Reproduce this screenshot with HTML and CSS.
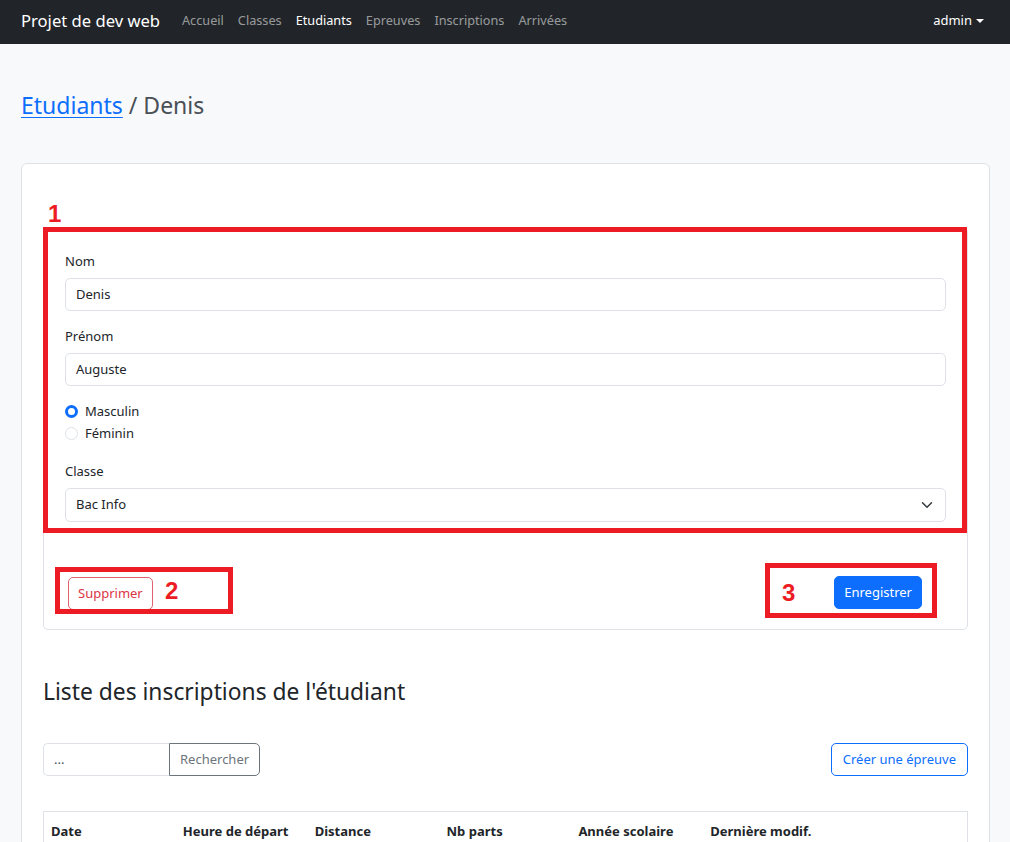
FILE: index.html
```html
<!DOCTYPE html>
<html lang="fr">
<head>
<meta charset="utf-8">
<title>Projet de dev web</title>
<link rel="stylesheet" href="styles.css">
</head>
<body>
<nav class="navbar">
  <a class="brand" href="#">Projet de dev web</a>
  <ul class="nav-links">
    <li><a href="#">Accueil</a></li>
    <li><a href="#">Classes</a></li>
    <li><a href="#" class="active">Etudiants</a></li>
    <li><a href="#">Epreuves</a></li>
    <li><a href="#">Inscriptions</a></li>
    <li><a href="#">Arrivées</a></li>
  </ul>
  <div class="user">admin<span class="caret"></span></div>
</nav>

<main class="page">
  <h1 class="page-title"><a href="#">Etudiants</a> / Denis</h1>

  <section class="outer-card">
    <div class="inner-card">
      <form class="card-body">
        <div class="group">
          <label class="label">Nom</label>
          <div class="input">Denis</div>
        </div>
        <div class="group">
          <label class="label">Prénom</label>
          <div class="input">Auguste</div>
        </div>
        <div class="radios">
          <div class="radio-line"><span class="radio checked"></span>Masculin</div>
          <div class="radio-line"><span class="radio"></span>Féminin</div>
        </div>
        <div class="group last">
          <label class="label">Classe</label>
          <div class="input select">
            <span>Bac Info</span>
            <svg width="12" height="12" viewBox="0 0 16 16"><path d="M2 5l6 6 6-6" fill="none" stroke="#343a40" stroke-width="2" stroke-linecap="round" stroke-linejoin="round"/></svg>
          </div>
        </div>
      </form>
      <div class="card-footer">
        <button class="btn btn-outline-danger">Supprimer</button>
        <button class="btn btn-primary">Enregistrer</button>
      </div>

      <div class="anno anno-box1"></div>
      <div class="anno-num num1">1</div>
      <div class="anno anno-box2"></div>
      <div class="anno-num num2">2</div>
      <div class="anno anno-box3"></div>
      <div class="anno-num num3">3</div>
    </div>

    <h2 class="section-title">Liste des inscriptions de l'étudiant</h2>

    <div class="toolbar">
      <div class="search">
        <div class="search-input">...</div>
        <button class="btn btn-outline-secondary search-btn">Rechercher</button>
      </div>
      <button class="btn btn-outline-primary">Créer une épreuve</button>
    </div>

    <div class="table-wrap">
      <table class="table">
        <thead>
          <tr>
            <th>Date</th>
            <th>Heure de départ</th>
            <th>Distance</th>
            <th>Nb parts</th>
            <th>Année scolaire</th>
            <th>Dernière modif.</th>
            <th></th>
          </tr>
        </thead>
        <tbody>
          <tr><td></td><td></td><td></td><td></td><td></td><td></td><td></td></tr>
        </tbody>
      </table>
    </div>
  </section>
</main>
</body>
</html>
```
FILE: styles.css
```css
* { box-sizing: border-box; }

html, body {
  margin: 0;
  padding: 0;
}

body {
  background: #f8f9fa;
  color: #212529;
  font-family: "Noto Sans", "Open Sans", sans-serif;
  font-size: 13px;
  line-height: 1.5;
}

a { text-decoration: none; }

/* Navbar */
.navbar {
  height: 44px;
  background: #212529;
  display: flex;
  align-items: center;
  padding: 0 26px 2px 21px;
}

.brand {
  color: #fff;
  font-size: 16.6px;
  margin-right: 15px;
}

.nav-links {
  display: flex;
  list-style: none;
  margin: 0;
  padding: 0;
  flex: 1;
}

.nav-links a {
  display: block;
  padding: 0 7px;
  color: rgba(255, 255, 255, 0.55);
  font-size: 12.7px;
}

.nav-links a.active { color: #fff; }

.user {
  color: #fff;
  font-size: 13px;
  display: flex;
  align-items: center;
}

.caret {
  display: inline-block;
  margin-left: 4px;
  border-top: 4px solid #fff;
  border-left: 4px solid transparent;
  border-right: 4px solid transparent;
}

/* Page */
.page {
  padding: 0 20px 0 21px;
}

.page-title {
  margin: 47px 0 43px;
  font-size: 23px;
  font-weight: 400;
  line-height: 1.25;
  color: #495057;
}

.page-title a {
  color: #0d6efd;
  text-decoration: underline;
  text-underline-offset: 3px;
  text-decoration-thickness: 1px;
}

.outer-card {
  background: #fff;
  border: 1px solid #dee2e6;
  border-radius: 6px;
  padding: 63px 21px 40px;
}

.inner-card {
  position: relative;
  border: 1px solid #dee2e6;
  border-radius: 5px;
}

.card-body {
  padding: 23px 21px 21px;
}

.group { margin-bottom: 15px; }
.group.last { margin-bottom: 0; }

.label {
  display: block;
  line-height: 21px;
  margin-bottom: 6px;
}

.input {
  height: 33px;
  border: 1px solid #dee2e6;
  border-radius: 5px;
  padding: 0 10px;
  display: flex;
  align-items: center;
}

.select {
  height: 34px;
  justify-content: space-between;
  padding-right: 12px;
}

.radios { margin-bottom: 16px; }

.radio-line {
  display: flex;
  align-items: center;
  height: 22px;
}

.radio {
  width: 13px;
  height: 13px;
  border-radius: 50%;
  border: 1px solid #dee2e6;
  margin-right: 7px;
  background: #fff;
}

.radio.checked {
  background: #fff;
  border: 3.5px solid #0d6efd;
}

.card-footer {
  display: flex;
  justify-content: space-between;
  align-items: center;
  padding: 34px 45px 19px 24px;
}

.btn {
  font-family: inherit;
  font-size: 13px;
  line-height: 21px;
  padding: 5px 10px;
  border-radius: 5px;
  border: 1px solid transparent;
  background: transparent;
  cursor: pointer;
}

.btn-outline-danger {
  color: #dc3545;
  border-color: #e0636f;
  padding: 5px 9px;
}

.btn-primary {
  background: #0d6efd;
  border-color: #0d6efd;
  color: #fff;
  margin-top: -1px;
  padding: 5px 9px;
}

.btn-outline-secondary {
  color: #6c757d;
  border-color: #6c757d;
}

.btn-outline-primary {
  color: #0d6efd;
  border-color: #0d6efd;
}

/* Annotations overlaid on the screenshot */
.anno {
  position: absolute;
  border: 5px solid #ed1c24;
  pointer-events: none;
}

.anno-box1 { left: -1px; top: -1px; width: 924px; height: 306px; }
.anno-box2 { left: 11px; top: 339px; width: 178px; height: 47px; }
.anno-box3 { left: 721px; top: 335px; width: 172px; height: 55px; }

.anno-num {
  position: absolute;
  color: #ed1c24;
  font-family: "Liberation Sans", Arial, sans-serif;
  font-weight: 700;
  font-size: 24px;
  line-height: 24px;
}

.num1 { left: 4px; top: -26px; }
.num2 { left: 121px; top: 351px; }
.num3 { left: 738px; top: 353px; }

/* Section below */
.section-title {
  margin: 48px 0 38px;
  font-size: 22.8px;
  font-weight: 400;
  line-height: 1.2;
}

.toolbar {
  display: flex;
  justify-content: space-between;
  align-items: center;
}

.search { display: flex; }

.search-input {
  width: 126px;
  height: 33px;
  border: 1px solid #dee2e6;
  border-right: none;
  border-radius: 5px 0 0 5px;
  padding: 0 10px;
  display: flex;
  align-items: center;
  color: #495057;
}

.search-btn {
  border-radius: 0 5px 5px 0;
  height: 33px;
  padding: 0 10px;
}

.toolbar .btn-outline-primary { height: 33px; padding: 0 11px; }

.table-wrap {
  margin-top: 35px;
  border: 1px solid #dee2e6;
  border-bottom: none;
}

.table {
  width: 100%;
  border-collapse: collapse;
  table-layout: fixed;
}

.table th {
  text-align: left;
  font-weight: 700;
  font-size: 13px;
  padding: 9px 7px 8px;
  line-height: 21px;
  border-bottom: 1px solid #dee2e6;
}

.table td {
  height: 40px;
}
```
